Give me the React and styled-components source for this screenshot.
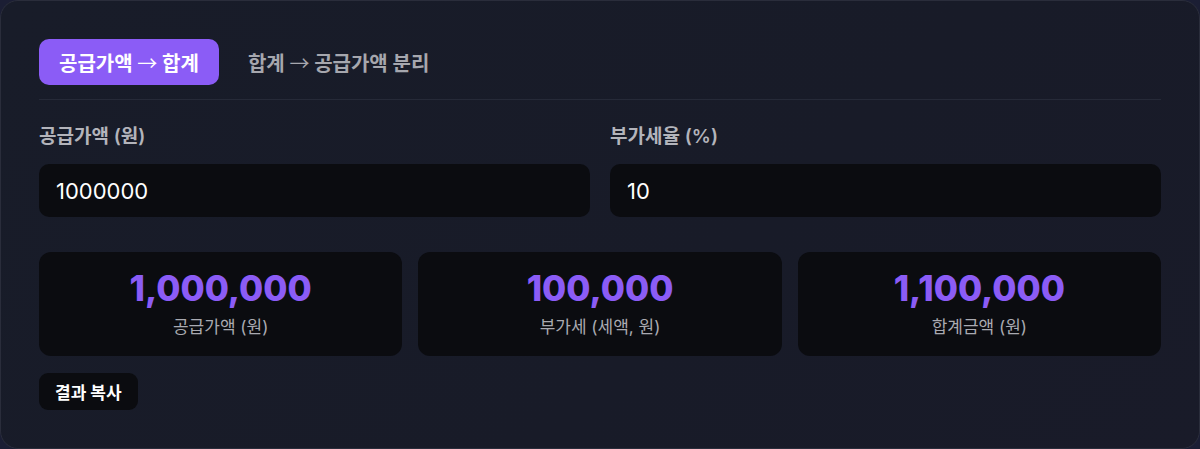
import React, { useState } from "react";
import styled, { createGlobalStyle } from "styled-components";

const GlobalStyle = createGlobalStyle`
  * { box-sizing: border-box; }
  html, body {
    margin: 0;
    padding: 0;
    background: #1b1e34;
    font-family: Inter, "Noto Sans CJK KR", "Noto Sans", sans-serif;
  }
`;

const Card = styled.div`
  width: 1200px;
  height: 449px;
  border: 1px solid #2a2d3b;
  border-radius: 18px;
  background: linear-gradient(135deg, #181c29 0%, #181b28 60%, #191b29 100%);
  padding: 38px 38px;
  display: flex;
  flex-direction: column;
`;

const Tabs = styled.div`
  display: flex;
  align-items: center;
  gap: 9px;
  padding-bottom: 14px;
  border-bottom: 1px solid #262a38;
`;

const Tab = styled.button`
  height: 46px;
  padding: 0 20px;
  border: none;
  border-radius: 10px;
  font-family: inherit;
  font-size: 20px;
  font-weight: 700;
  cursor: pointer;
  background: ${(p) => (p.$active ? "#8b5cf6" : "transparent")};
  color: ${(p) => (p.$active ? "#ffffff" : "#a6a7ae")};
`;

/* thin full-width arrow between the two step names */
const Arrow = styled.span`
  font-family: "Noto Sans CJK KR", sans-serif;
  font-weight: 400;
`;

const Fields = styled.div`
  display: grid;
  grid-template-columns: 1fr 1fr;
  gap: 20px;
  margin-top: 24px;
`;

const Field = styled.label`
  display: flex;
  flex-direction: column;
  gap: 14px;
`;

const FieldLabel = styled.span`
  font-size: 19px;
  line-height: 26px;
  font-weight: 600;
  color: #b3b4bb;
`;

const Input = styled.input`
  height: 53px;
  border: none;
  outline: none;
  border-radius: 10px;
  background: #0b0c10;
  color: #ffffff;
  font-family: inherit;
  font-size: 22px;
  padding: 0 17px;
`;

const Results = styled.div`
  display: grid;
  grid-template-columns: repeat(3, 1fr);
  gap: 16px;
  margin-top: 35px;
`;

const ResultBox = styled.div`
  height: 104px;
  border-radius: 12px;
  background: #0b0c10;
  display: flex;
  flex-direction: column;
  align-items: center;
  justify-content: center;
  gap: 10px;
`;

const Amount = styled.div`
  font-size: 35px;
  line-height: 36px;
  font-weight: 800;
  color: #8b5cf6;
`;

const AmountLabel = styled.div`
  font-size: 17px;
  line-height: 22px;
  color: #a9aab1;
`;

const CopyButton = styled.button`
  align-self: flex-start;
  margin-top: 17px;
  height: 38px;
  padding: 0 16px;
  border: none;
  border-radius: 9px;
  background: #0b0c10;
  color: #ffffff;
  font-family: inherit;
  font-size: 17px;
  font-weight: 700;
  cursor: pointer;
`;

const fmt = (n) => Math.round(n).toLocaleString("en-US");

export default function App() {
  const [mode, setMode] = useState(0);
  const [supply, setSupply] = useState("1000000");
  const [rate, setRate] = useState("10");

  const s = Number(supply) || 0;
  const r = Number(rate) || 0;
  const vat = (s * r) / 100;

  const results = [
    { value: s, label: "공급가액 (원)" },
    { value: vat, label: "부가세 (세액, 원)" },
    { value: s + vat, label: "합계금액 (원)" },
  ];

  return (
    <>
      <GlobalStyle />
      <Card>
        <Tabs>
          <Tab $active={mode === 0} onClick={() => setMode(0)}>
            공급가액 <Arrow>→</Arrow> 합계
          </Tab>
          <Tab $active={mode === 1} onClick={() => setMode(1)}>
            합계 <Arrow>→</Arrow> 공급가액 분리
          </Tab>
        </Tabs>
        <Fields>
          <Field>
            <FieldLabel>공급가액 (원)</FieldLabel>
            <Input value={supply} onChange={(e) => setSupply(e.target.value)} />
          </Field>
          <Field>
            <FieldLabel>부가세율 (%)</FieldLabel>
            <Input value={rate} onChange={(e) => setRate(e.target.value)} />
          </Field>
        </Fields>
        <Results>
          {results.map((r) => (
            <ResultBox key={r.label}>
              <Amount>{fmt(r.value)}</Amount>
              <AmountLabel>{r.label}</AmountLabel>
            </ResultBox>
          ))}
        </Results>
        <CopyButton>결과 복사</CopyButton>
      </Card>
    </>
  );
}
